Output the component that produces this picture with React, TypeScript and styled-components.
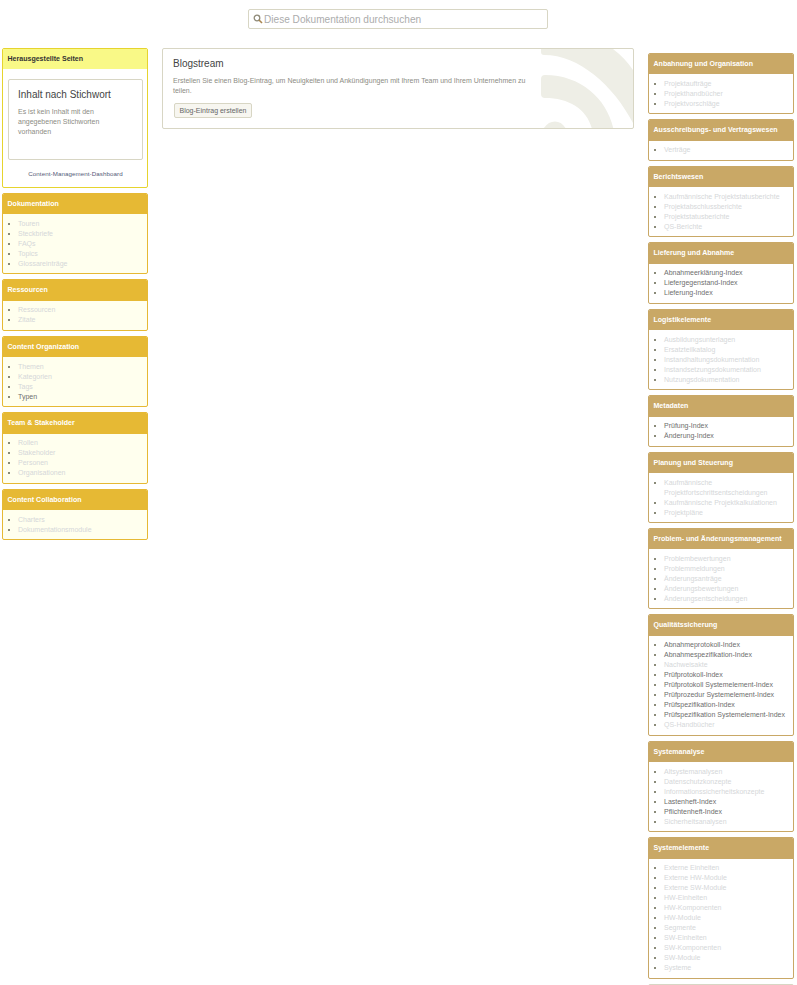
import React from 'react';
import styled, { createGlobalStyle } from 'styled-components';

type Item = { label: string; live?: boolean };
type Group = { title: string; items: Item[] };

const GlobalStyle = createGlobalStyle`
	html,
	body {
		margin: 0;
		height: 985px;
		overflow: hidden;
		background: #fff;
		font-family: 'Liberation Sans', Arial, sans-serif;
	}
`;

const SearchRow = styled.div`
	display: flex;
	justify-content: center;
	padding: 9px 0 19px;
	margin-right: 1px;
`;

const SearchBox = styled.div`
	box-sizing: border-box;
	width: 300px;
	height: 20px;
	display: flex;
	align-items: center;
	gap: 1px;
	padding-left: 4px;
	border: 1px solid #d8d6c4;
	border-radius: 2px;
	font-size: 10.1px;
	color: #acacac;
`;

const Columns = styled.div`
	display: flex;
	align-items: flex-start;
	padding-left: 2px;
`;

const LeftColumn = styled.div`
	width: 146px;
	display: flex;
	flex-direction: column;
	gap: 5px;
`;

const CenterColumn = styled.div`
	width: 472px;
	margin-left: 14px;
`;

const RightColumn = styled.div`
	width: 146px;
	margin: 5px 0 0 14px;
	display: flex;
	flex-direction: column;
	gap: 5px;
`;

const Panel = styled.section<{ $border: string; $fill?: string }>`
	box-sizing: border-box;
	border: 1px solid ${(p) => p.$border};
	border-radius: 2px;
	background: ${(p) => p.$fill || '#fff'};
	overflow: hidden;
`;

const PanelHeader = styled.h3<{ $fill: string; $color?: string }>`
	box-sizing: border-box;
	margin: 0;
	height: 20.45px;
	padding: 0 4.5px;
	line-height: 19px;
	font-size: 7.05px;
	font-weight: bold;
	white-space: nowrap;
	color: ${(p) => p.$color || '#fff'};
	background: ${(p) => p.$fill};
`;

const List = styled.ul`
	margin: 0;
	padding: 4.55px 2px 4.45px 15px;
	list-style: none;
`;

const Row = styled.li`
	position: relative;
	font-size: 7px;
	line-height: 10px;

	&::before {
		content: '';
		position: absolute;
		left: -10px;
		top: 4px;
		width: 2px;
		height: 2px;
		background: #8a8a78;
	}
`;

const RowLink = styled.span<{ $live?: boolean }>`
	color: ${(p) => (p.$live ? '#6e6e6e' : '#d5d7d9')};
`;

const Card = styled.div`
	box-sizing: border-box;
	position: relative;
	height: 81px;
	padding: 9px 10px 0;
	border: 1px solid #d8d6c4;
	border-radius: 2px;
	background: #fff;
	overflow: hidden;
`;

const Watermark = styled.svg`
	position: absolute;
	right: 0;
	top: 0;
	width: 92px;
	height: 80px;
`;

const CardBody = styled.div`
	position: relative;
	width: 358px;
`;

const CardTitle = styled.h2`
	margin: 0;
	font-size: 10px;
	font-weight: normal;
	line-height: 12px;
	color: #444;
`;

const CardText = styled.p`
	margin: 6px 0 0;
	font-size: 7px;
	line-height: 10px;
	color: #8c8c84;
`;

const CreateButton = styled.button`
	display: block;
	box-sizing: border-box;
	height: 15px;
	margin: 7px 0 0 1px;
	padding: 0 4.5px;
	border: 1px solid #d8d6c4;
	border-radius: 2px;
	background: #f7f6f0;
	font-family: inherit;
	font-size: 7px;
	color: #666;
`;

const FeaturedBody = styled.div`
	padding: 10px 4px 0 5px;
	height: 117.55px;
	box-sizing: border-box;
`;

const InnerCard = styled.div`
	box-sizing: border-box;
	height: 81px;
	padding: 9px 9px 0;
	border: 1px solid #d8d6c4;
	border-radius: 2px;
`;

const DashboardLink = styled.div`
	margin-top: 10px;
	text-align: center;
	font-size: 6.2px;
	line-height: 8px;
	letter-spacing: 0.08px;
	color: #555a78;
`;

const gather = (labels: string, live = ''): Item[] => {
	const on = live.split('|');
	return labels.split('|').map((label) => ({ label, live: on.includes(label) }));
};

const leftGroups: Group[] = [
	{ title: 'Dokumentation', items: gather('Touren|Steckbriefe|FAQs|Topics|Glossareinträge') },
	{ title: 'Ressourcen', items: gather('Ressourcen|Zitate') },
	{ title: 'Content Organization', items: gather('Themen|Kategorien|Tags|Typen', 'Typen') },
	{ title: 'Team & Stakeholder', items: gather('Rollen|Stakeholder|Personen|Organisationen') },
	{ title: 'Content Collaboration', items: gather('Charters|Dokumentationsmodule') },
];

const qsLive =
	'Abnahmeprotokoll-Index|Abnahmespezifikation-Index|Prüfprotokoll-Index|Prüfprotokoll Systemelement-Index|Prüfprozedur Systemelement-Index|Prüfspezifikation-Index|Prüfspezifikation Systemelement-Index';

const rightGroups: Group[] = [
	{ title: 'Anbahnung und Organisation', items: gather('Projektaufträge|Projekthandbücher|Projektvorschläge') },
	{ title: 'Ausschreibungs- und Vertragswesen', items: gather('Verträge') },
	{
		title: 'Berichtswesen',
		items: gather('Kaufmännische Projektstatusberichte|Projektabschlussberichte|Projektstatusberichte|QS-Berichte'),
	},
	{
		title: 'Lieferung und Abnahme',
		items: gather(
			'Abnahmeerklärung-Index|Liefergegenstand-Index|Lieferung-Index',
			'Abnahmeerklärung-Index|Liefergegenstand-Index|Lieferung-Index'
		),
	},
	{
		title: 'Logistikelemente',
		items: gather(
			'Ausbildungsunterlagen|Ersatzteilkatalog|Instandhaltungsdokumentation|Instandsetzungsdokumentation|Nutzungsdokumentation'
		),
	},
	{ title: 'Metadaten', items: gather('Prüfung-Index|Änderung-Index', 'Prüfung-Index|Änderung-Index') },
	{
		title: 'Planung und Steuerung',
		items: gather('Kaufmännische Projektfortschrittsentscheidungen|Kaufmännische Projektkalkulationen|Projektpläne'),
	},
	{
		title: 'Problem- und Änderungsmanagement',
		items: gather(
			'Problembewertungen|Problemmeldungen|Änderungsanträge|Änderungsbewertungen|Änderungsentscheidungen'
		),
	},
	{
		title: 'Qualitätssicherung',
		items: gather(
			'Abnahmeprotokoll-Index|Abnahmespezifikation-Index|Nachweisakte|Prüfprotokoll-Index|Prüfprotokoll Systemelement-Index|Prüfprozedur Systemelement-Index|Prüfspezifikation-Index|Prüfspezifikation Systemelement-Index|QS-Handbücher',
			qsLive
		),
	},
	{
		title: 'Systemanalyse',
		items: gather(
			'Altsystemanalysen|Datenschutzkonzepte|Informationssicherheitskonzepte|Lastenheft-Index|Pflichtenheft-Index|Sicherheitsanalysen',
			'Lastenheft-Index|Pflichtenheft-Index'
		),
	},
	{
		title: 'Systemelemente',
		items: gather(
			'Externe Einheiten|Externe HW-Module|Externe SW-Module|HW-Einheiten|HW-Komponenten|HW-Module|Segmente|SW-Einheiten|SW-Komponenten|SW-Module|Systeme'
		),
	},
];

const NavPanel = ({ group, color, fill }: { group: Group; color: string; fill?: string }): JSX.Element => (
	<Panel $border={color} $fill={fill}>
		<PanelHeader $fill={color}>{group.title}</PanelHeader>
		<List>
			{group.items.map((item) => (
				<Row key={item.label}>
					<RowLink $live={item.live}>{item.label}</RowLink>
				</Row>
			))}
		</List>
	</Panel>
);

const App = (): JSX.Element => (
	<>
		<GlobalStyle />
		<SearchRow>
			<SearchBox>
				<svg width="10" height="10" viewBox="0 0 10 10" fill="none">
					<circle cx="4" cy="4" r="2.8" stroke="#8f8a78" strokeWidth="1.3" />
					<path d="M6 6l3 3" stroke="#a8854f" strokeWidth="1.6" />
				</svg>
				Diese Dokumentation durchsuchen
			</SearchBox>
		</SearchRow>
		<Columns>
			<LeftColumn>
				<Panel $border="#e6d42e">
					<PanelHeader $fill="#f9f987" $color="#333">
						Herausgestellte Seiten
					</PanelHeader>
					<FeaturedBody>
						<InnerCard>
							<CardTitle>Inhalt nach Stichwort</CardTitle>
							<CardText>
								Es ist kein Inhalt mit den
								<br />
								angegebenen Stichworten
								<br />
								vorhanden
							</CardText>
						</InnerCard>
						<DashboardLink>Content-Management-Dashboard</DashboardLink>
					</FeaturedBody>
				</Panel>
				{leftGroups.map((group) => (
					<NavPanel key={group.title} group={group} color="#e6b934" fill="#ffffee" />
				))}
			</LeftColumn>
			<CenterColumn>
				<Card>
					<Watermark viewBox="0 0 92 80" fill="#eeeee6">
						<path d="M1 0H72Q84 9 92 21V74C72 36 38 6 3 6Q0 6 0 3V0Z" />
						<path d="M4 26C40 26 66 50 72.5 80H51C46 60 28 49 4 49Q0 49 0 45V30Q0 26 4 26Z" />
						<path d="M2.3 80C8 70 20 70 25 80Z" />
					</Watermark>
					<CardBody>
						<CardTitle>Blogstream</CardTitle>
						<CardText>
							Erstellen Sie einen Blog-Eintrag, um Neuigkeiten und Ankündigungen mit Ihrem Team und Ihrem Unternehmen zu
							teilen.
						</CardText>
						<CreateButton>Blog-Eintrag erstellen</CreateButton>
					</CardBody>
				</Card>
			</CenterColumn>
			<RightColumn>
				{rightGroups.map((group) => (
					<NavPanel key={group.title} group={group} color="#c9a866" />
				))}
				<Panel $border="#d8d6c4">
					<PanelHeader $fill="#fff"> </PanelHeader>
				</Panel>
			</RightColumn>
		</Columns>
	</>
);

export default App;
